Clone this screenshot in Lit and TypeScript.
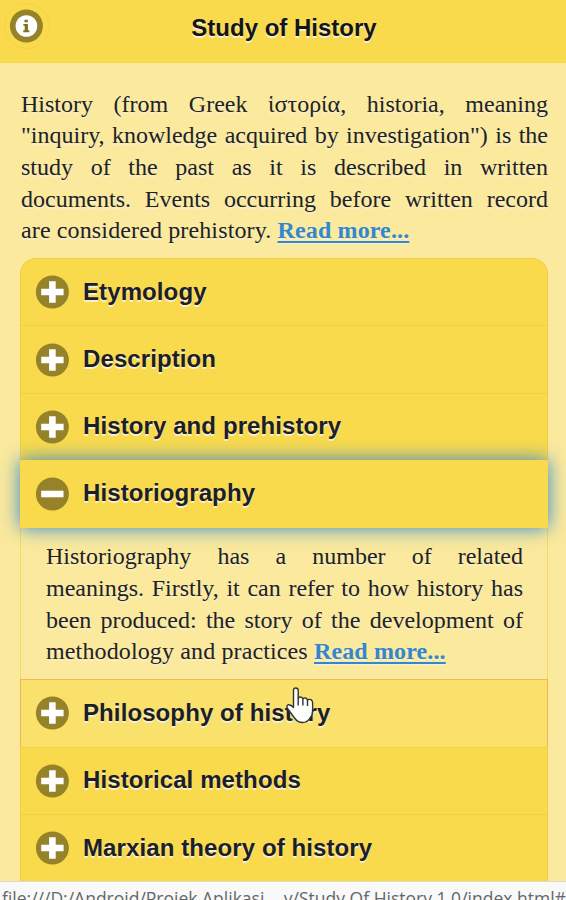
import { LitElement, html, svg, css } from "lit";
import { customElement, property } from "lit/decorators.js";

@customElement("toggle-icon")
class ToggleIcon extends LitElement {
  @property() kind = "plus";
  static styles = css`
    :host { display: block; width: 34px; height: 34px; }
    svg { display: block; }
  `;
  render() {
    return html`<svg width="34" height="34" viewBox="0 0 34 34">
      <circle cx="17.4" cy="17" r="16.5" fill="#958229" />
      ${this.kind === "info"
        ? svg`<circle cx="17.4" cy="17" r="10.8" fill="#fff" />
            <path d="M15.5 10.7h3.3v2.5h-3.3zM14.4 14.9h4.5v6.4h1.4v1.9h-6v-1.9h1.4v-4.6h-1.3z" fill="#81701f" />`
        : this.kind === "minus"
          ? svg`<path d="M6.2 13.7h22.3v6.6H6.2z" fill="#fff" />`
          : svg`<path d="M14.1 6.2h6.6v7.5h7.9v6.6h-7.9v7.5h-6.6v-7.5H6.2v-6.6h7.9z" fill="#fff" />`}
    </svg>`;
  }
}

@customElement("section-row")
class SectionRow extends LitElement {
  @property() label = "";
  @property() icon = "plus";
  static styles = css`
    :host {
      display: flex; align-items: center; box-sizing: border-box; height: 67.4px;
      padding: 0 0 0 14px; gap: 14px;
      border: 1.5px solid #f3ce45; border-bottom: 0;
      background: #fada4d; color: #1c2026;
      font: bold 24px/30px "Liberation Sans", Arial, sans-serif;
      letter-spacing: 0.1px;
      text-shadow: 0 1.5px 0 #f6efd0;
    }
    :host(.first) { border-radius: 16px 16px 0 0; }
    :host(.active) {
      position: relative; z-index: 1; height: 68px; padding-bottom: 2px;
      border-color: #fada4d;
      box-shadow: 0 0 18px #3388cc;
    }
    :host(.hover) { background: #f9e16c; border-color: #f0b55c; }
    .label { white-space: nowrap; margin-top: -1px; }
  `;
  render() {
    return html`<toggle-icon kind=${this.icon}></toggle-icon><span class="label">${this.label}</span>`;
  }
}

@customElement("app-root")
class AppRoot extends LitElement {
  static styles = css`
    :host {
      display: flex; flex-direction: column; width: 566px; height: 900px; overflow: hidden;
      background: #fbe99d; color: #222;
      font: 24px/31.7px "Liberation Serif", "Times New Roman", serif;
    }
    header {
      flex: none; display: grid; grid-template-columns: 48px 1fr 46px; align-items: start;
      box-sizing: border-box; height: 63px; padding: 0 4px;
      background: #fada4d; border-bottom: 1.5px solid #f6d64f;
    }
    .info {
      box-sizing: border-box; width: 46px; height: 46px; margin-top: 3px; padding: 5px 5px 5px 4px;
      border: 1px solid #f5d149; border-radius: 50%;
    }
    h1 {
      margin: 13px 0 0; text-align: center; color: #151515;
      font: bold 24px/30px "Liberation Sans", Arial, sans-serif;
      text-shadow: 0 1.5px 0 #f6efd0;
    }
    main { flex: 1; min-height: 0; overflow: hidden; padding: 25px 18px 0 20px; }
    .text { text-shadow: 0 1.5px 0 #f6efd0; }
    .line { display: block; white-space: nowrap; text-align: justify; text-align-last: justify; }
    .last { text-align-last: left; letter-spacing: 0.13px; }
    .intro { box-sizing: border-box; padding: 0.5px 0 0 1px; height: 170px; }
    .panel {
      box-sizing: border-box; height: 151px; padding: 13px 24px 0 25px;
      border: solid #f9d860; border-width: 0 1.5px;
    }
    a { color: #3388cc; font-weight: bold; text-decoration: underline; text-decoration-thickness: 2px; text-underline-offset: 3px; }
    .hovered { position: relative; }
    .pointer { position: absolute; left: 265px; top: 7px; z-index: 2; }
    .status {
      flex: none; box-sizing: border-box; height: 19px; overflow: hidden; padding: 4px 0 0 2px;
      background: #f9f9f9; border-top: 1px solid #e2dcc5; color: #666;
      font: 17.5px/24px "Open Sans", "Noto Sans", sans-serif; white-space: nowrap;
    }
    .dots { letter-spacing: 1.9px; }
  `;
  private paragraph(lines: string[], tail: string) {
    return html`${lines.map((l) => html`<span class="line">${l}</span>`)}<span class="line last">${tail} <a>Read more...</a></span>`;
  }
  render() {
    return html`
      <header>
        <div class="info"><toggle-icon kind="info"></toggle-icon></div>
        <h1>Study of History</h1>
      </header>
      <main>
        <div class="text intro">
          ${this.paragraph(
            [
              "History (from Greek ἱστορία, historia, meaning",
              "\"inquiry, knowledge acquired by investigation\") is the",
              "study of the past as it is described in written",
              "documents. Events occurring before written record",
            ],
            "are considered prehistory.",
          )}
        </div>
        <section-row class="first" label="Etymology"></section-row>
        <section-row label="Description"></section-row>
        <section-row label="History and prehistory"></section-row>
        <section-row class="active" label="Historiography" icon="minus"></section-row>
        <div class="text panel">
          ${this.paragraph(
            [
              "Historiography has a number of related",
              "meanings. Firstly, it can refer to how history has",
              "been produced: the story of the development of",
            ],
            "methodology and practices",
          )}
        </div>
        <div class="hovered">
          <section-row class="hover" label="Philosophy of history"></section-row>
          <svg class="pointer" width="32" height="40" viewBox="0 0 32 40">
            <path d="M8.5 4.5Q8.5 2 10.8 2T13.2 4.5V12Q16.5 9.8 17.8 12.7Q21 10.7 22.3 13.7Q27.6 12.3 27.6 17V25Q27.6 29 25 32Q22.5 36.5 17.5 36.5Q12.5 36.5 9.5 32L2.5 22.5Q1 19.5 3.5 18.7Q6 18.5 8.5 21.5Z" fill="#fff" stroke="#333" stroke-width="1.4" stroke-linejoin="round" />
            <path d="M13.2 12v7.5M17.9 13v6.5M22.5 14v6" fill="none" stroke="#333" stroke-width="1.4" />
          </svg>
        </div>
        <section-row label="Historical methods"></section-row>
        <section-row label="Marxian theory of history"></section-row>
      </main>
      <div class="status">file:///D:/Android/Projek Aplikasi<span class="dots">...</span>y/Study Of History 1.0/index.html#</div>
    `;
  }
}
